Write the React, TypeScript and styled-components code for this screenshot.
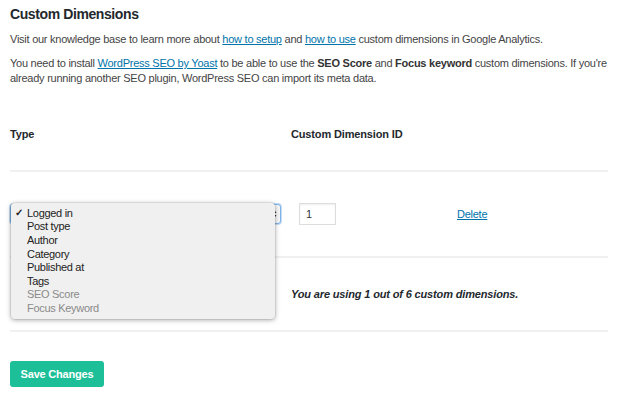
import React from "react";
import styled, { createGlobalStyle } from "styled-components";

const GlobalStyle = createGlobalStyle`
  html, body {
    margin: 0;
    padding: 0;
    background: #ffffff;
  }
  body {
    font-family: "Liberation Sans", Arial, sans-serif;
    letter-spacing: -0.25px;
    color: #444444;
  }
`;

const typeOptions = [
  { label: "Logged in", checked: true },
  { label: "Post type" },
  { label: "Author" },
  { label: "Category" },
  { label: "Published at" },
  { label: "Tags" },
  { label: "SEO Score", disabled: true },
  { label: "Focus Keyword", disabled: true },
];

export default function App() {
  return (
    <>
      <GlobalStyle />
      <Page>
        <Title>Custom Dimensions</Title>
        <Text>
          Visit our knowledge base to learn more about <Link>how to setup</Link> and{" "}
          <Link>how to use</Link> custom dimensions in Google Analytics.
        </Text>
        <Text>
          You need to install <Link>WordPress SEO by Yoast</Link> to be able to use the{" "}
          <b>SEO Score</b> and <b>Focus keyword</b> custom dimensions. If you're already
          running another SEO plugin, WordPress SEO can import its meta data.
        </Text>

        <Table>
          <HeadRow>
            <HeadCell>Type</HeadCell>
            <HeadCell>Custom Dimension ID</HeadCell>
            <HeadCell />
          </HeadRow>
          <BodyRow $height={86}>
            <Cell>
              <SelectBox>
                <Arrows>
                  <svg width="6" height="10" viewBox="0 0 6 10">
                    <path d="M3 0.5 L5.5 4 H0.5 Z" fill="#333" />
                    <path d="M3 9.5 L5.5 6 H0.5 Z" fill="#333" />
                  </svg>
                </Arrows>
                <Menu>
                  {typeOptions.map((o) => (
                    <MenuItem key={o.label} $disabled={o.disabled}>
                      <Check>{o.checked ? "✓" : ""}</Check>
                      {o.label}
                    </MenuItem>
                  ))}
                </Menu>
              </SelectBox>
            </Cell>
            <Cell>
              <NumberBox>1</NumberBox>
            </Cell>
            <Cell>
              <Link>Delete</Link>
            </Cell>
          </BodyRow>
          <BodyRow $height={74}>
            <Cell />
            <Usage>You are using 1 out of 6 custom dimensions.</Usage>
          </BodyRow>
        </Table>

        <SaveButton>Save Changes</SaveButton>
      </Page>
    </>
  );
}

const Page = styled.div`
  width: 598px;
  padding: 4px 10px 0;
`;

const Title = styled.h2`
  margin: 0 0 8px;
  font-size: 14px;
  line-height: 20px;
  font-weight: 700;
  letter-spacing: -0.4px;
  color: #23282d;
`;

const Text = styled.p`
  margin: 0 0 9px;
  font-size: 11px;
  line-height: 15px;
  color: #444444;

  b {
    font-weight: 700;
    color: #333;
  }
`;

const Link = styled.a`
  color: #0073aa;
  text-decoration: underline;
  cursor: pointer;
`;

const Table = styled.div`
  margin-top: 16px;
`;

const HeadRow = styled.div`
  display: grid;
  grid-template-columns: 281px 166px 1fr;
  height: 70px;
  align-items: center;
  padding-bottom: 4px;
  box-sizing: border-box;
  border-bottom: 2px solid #f0f0f0;
`;

const HeadCell = styled.div`
  font-size: 11px;
  font-weight: 700;
  letter-spacing: -0.15px;
  color: #23282d;
`;

const BodyRow = styled.div<{ $height: number }>`
  display: grid;
  grid-template-columns: 281px 166px 1fr;
  height: ${(p) => p.$height}px;
  align-items: center;
  border-bottom: 2px solid #f0f0f0;
  box-sizing: border-box;
  font-size: 11px;
`;

const Cell = styled.div`
  display: flex;
  align-items: center;
`;

const SelectBox = styled.div`
  position: relative;
  width: 271px;
  height: 20px;
  box-sizing: border-box;
  border: 1px solid #7eb4ea;
  border-radius: 3px;
  box-shadow: 0 0 0 1px rgba(91, 157, 217, 0.35);
  background: #f7f7f7;
  display: flex;
  justify-content: flex-end;
  align-items: center;
`;

const Arrows = styled.span`
  display: flex;
  padding-right: 3px;
`;

const Menu = styled.div`
  position: absolute;
  left: 0;
  top: -2px;
  width: 264px;
  padding: 3px 0 4px;
  background: #f0f0f0;
  border-radius: 4px;
  box-shadow: 0 1px 5px rgba(0, 0, 0, 0.35), 0 0 0 1px rgba(0, 0, 0, 0.06);
  z-index: 5;
`;

const MenuItem = styled.div<{ $disabled?: boolean }>`
  display: flex;
  align-items: center;
  height: 13.6px;
  font-size: 11px;
  letter-spacing: -0.3px;
  color: ${(p) => (p.$disabled ? "#8a8a8a" : "#222222")};
`;

const Check = styled.span`
  box-sizing: border-box;
  width: 16px;
  padding-left: 4px;
  font-size: 10px;
  font-weight: 700;
  color: #222;
`;

const NumberBox = styled.div`
  width: 37px;
  height: 22px;
  box-sizing: border-box;
  margin-left: 8px;
  padding-left: 6px;
  border: 1px solid #dddddd;
  box-shadow: inset 0 1px 2px rgba(0, 0, 0, 0.07);
  display: flex;
  align-items: center;
  font-size: 11px;
  color: #32373c;
`;

const Usage = styled.div`
  grid-column: 2 / 4;
  font-size: 11px;
  font-weight: 700;
  font-style: italic;
  letter-spacing: -0.15px;
  color: #23282d;
`;

const SaveButton = styled.button`
  margin-top: 29px;
  width: 94px;
  height: 26px;
  border: none;
  border-radius: 3px;
  background: #1cbf98;
  color: #ffffff;
  font-family: "Liberation Sans", Arial, sans-serif;
  font-size: 11px;
  font-weight: 700;
  letter-spacing: -0.2px;
  cursor: pointer;
`;
